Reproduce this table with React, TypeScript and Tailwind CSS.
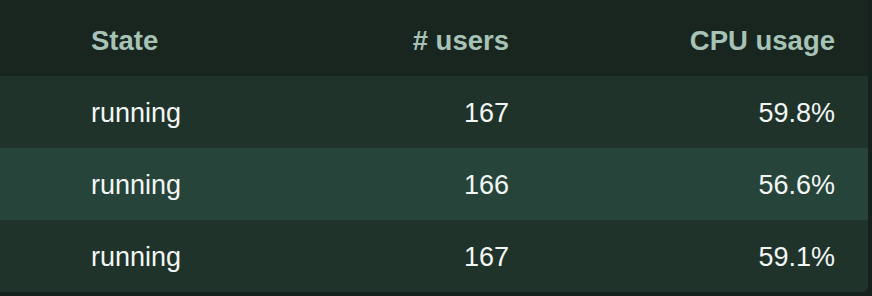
const rows = [
  { state: "running", users: 167, cpu: "59.8%" },
  { state: "running", users: 166, cpu: "56.6%" },
  { state: "running", users: 167, cpu: "59.1%" },
];

export default function App() {
  return (
    <div className="h-[296px] w-[872px] overflow-hidden bg-[#16201c] font-['Liberation_Sans',Arial,sans-serif] text-[27px]">
      <div className="w-[868px] overflow-hidden rounded-br-md">
        <div className="grid h-[76px] grid-cols-[216px_326px_326px] items-center bg-[#19251f] pt-[5px] text-[27.5px] font-bold text-[#a6c3b6]">
          <div className="pl-[91px]">State</div>
          <div className="pr-[33px] text-right"># users</div>
          <div className="pr-[33px] text-right">CPU usage</div>
        </div>
        {rows.map((r, i) => (
          <div
            key={i}
            className={`grid h-[72px] grid-cols-[216px_326px_326px] items-center pt-[3px] text-[#f2f6f4] ${
              i % 2 === 1 ? "bg-[#27443a]" : "bg-[#20332b]"
            }`}
          >
            <div className="pl-[91px]">{r.state}</div>
            <div className="pr-[33px] text-right">{r.users}</div>
            <div className="pr-[33px] text-right">{r.cpu}</div>
          </div>
        ))}
      </div>
    </div>
  );
}
